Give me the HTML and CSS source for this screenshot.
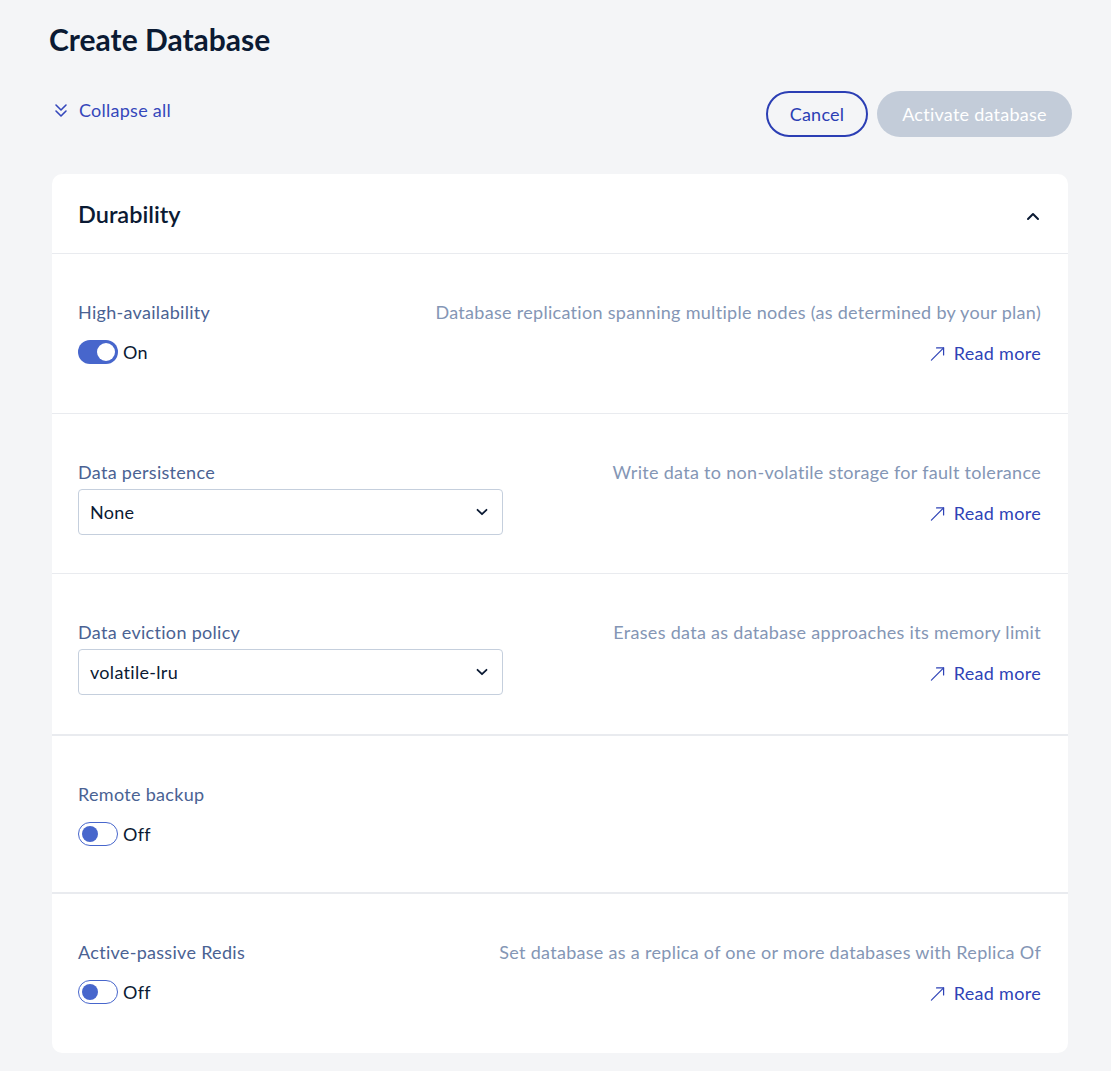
FILE: index.html
```html
<!DOCTYPE html>
<html lang="en">
<head>
<meta charset="utf-8">
<title>Create Database</title>
<link rel="stylesheet" href="styles.css">
</head>
<body>
<main class="page">
  <h1 class="page-title">Create Database</h1>
  <div class="toolbar">
    <button class="collapse-link" type="button">
      <svg class="collapse-icon" width="14" height="16" viewBox="0 0 14 16" fill="none" stroke="currentColor" stroke-width="1.6" stroke-linecap="round" stroke-linejoin="round"><path d="M2 3l5 5 5-5"/><path d="M2 9l5 5 5-5"/></svg>
      <span>Collapse all</span>
    </button>
    <div class="actions">
      <button class="btn btn-outline" type="button">Cancel</button>
      <button class="btn btn-disabled" type="button">Activate database</button>
    </div>
  </div>

  <section class="card">
    <header class="card-header">
      <h2 class="card-title">Durability</h2>
      <svg class="header-chevron" width="14" height="10" viewBox="0 0 14 10" fill="none" stroke="#0b1a33" stroke-width="2" stroke-linecap="round" stroke-linejoin="round"><path d="M2 8l5-5 5 5"/></svg>
    </header>

    <div class="row row-1">
      <div class="field">
        <div class="label">High-availability</div>
        <div class="control">
          <span class="toggle toggle-on"><span class="knob"></span></span>
          <span class="toggle-text">On</span>
        </div>
      </div>
      <div class="info">
        <div class="desc">Database replication spanning multiple nodes (as determined by your plan)</div>
        <a class="read-more" href="#"><svg width="15" height="15" viewBox="0 0 16 16" fill="none" stroke="currentColor" stroke-width="1.3" stroke-linecap="round" stroke-linejoin="round"><path d="M1.5 15L14.5 2"/><path d="M7 2h7.5v7.5"/></svg>Read more</a>
      </div>
    </div>

    <div class="row row-2">
      <div class="field">
        <div class="label">Data persistence</div>
        <div class="control">
          <div class="select"><span>None</span><svg width="12" height="8" viewBox="0 0 12 8" fill="none" stroke="#0b1a33" stroke-width="1.8" stroke-linecap="round" stroke-linejoin="round"><path d="M1.5 1.8L6 6.2l4.5-4.4"/></svg></div>
        </div>
      </div>
      <div class="info">
        <div class="desc">Write data to non-volatile storage for fault tolerance</div>
        <a class="read-more" href="#"><svg width="15" height="15" viewBox="0 0 16 16" fill="none" stroke="currentColor" stroke-width="1.3" stroke-linecap="round" stroke-linejoin="round"><path d="M1.5 15L14.5 2"/><path d="M7 2h7.5v7.5"/></svg>Read more</a>
      </div>
    </div>

    <div class="row row-3">
      <div class="field">
        <div class="label">Data eviction policy</div>
        <div class="control">
          <div class="select"><span>volatile-lru</span><svg width="12" height="8" viewBox="0 0 12 8" fill="none" stroke="#0b1a33" stroke-width="1.8" stroke-linecap="round" stroke-linejoin="round"><path d="M1.5 1.8L6 6.2l4.5-4.4"/></svg></div>
        </div>
      </div>
      <div class="info">
        <div class="desc">Erases data as database approaches its memory limit</div>
        <a class="read-more" href="#"><svg width="15" height="15" viewBox="0 0 16 16" fill="none" stroke="currentColor" stroke-width="1.3" stroke-linecap="round" stroke-linejoin="round"><path d="M1.5 15L14.5 2"/><path d="M7 2h7.5v7.5"/></svg>Read more</a>
      </div>
    </div>

    <div class="row row-4">
      <div class="field">
        <div class="label">Remote backup</div>
        <div class="control">
          <span class="toggle toggle-off"><span class="knob"></span></span>
          <span class="toggle-text">Off</span>
        </div>
      </div>
    </div>

    <div class="row row-5">
      <div class="field">
        <div class="label">Active-passive Redis</div>
        <div class="control">
          <span class="toggle toggle-off"><span class="knob"></span></span>
          <span class="toggle-text">Off</span>
        </div>
      </div>
      <div class="info">
        <div class="desc">Set database as a replica of one or more databases with Replica Of</div>
        <a class="read-more" href="#"><svg width="15" height="15" viewBox="0 0 16 16" fill="none" stroke="currentColor" stroke-width="1.3" stroke-linecap="round" stroke-linejoin="round"><path d="M1.5 15L14.5 2"/><path d="M7 2h7.5v7.5"/></svg>Read more</a>
      </div>
    </div>
  </section>
</main>
</body>
</html>
```

FILE: styles.css
```css
* { box-sizing: border-box; }
html, body { margin: 0; padding: 0; }
body {
  background: #f4f5f7;
  font-family: Lato, "Noto Sans", "Liberation Sans", sans-serif;
  color: #0b1a33;
  width: 1111px;
  height: 1071px;
  overflow: hidden;
  letter-spacing: 0.3px;
}
.page {
  padding: 21px 43px 18px 52px;
}
.page-title {
  margin: 0 0 0 -3px;
  font-size: 30px;
  line-height: 36px;
  font-weight: 700;
  letter-spacing: 0;
  color: #0b1a33;
}
.toolbar {
  display: flex;
  justify-content: space-between;
  align-items: flex-start;
  margin-top: 34px;
  margin-bottom: 37px;
}
.collapse-link {
  display: flex;
  align-items: center;
  gap: 11px;
  background: none;
  border: 0;
  padding: 0;
  margin: 0 0 0 2px;
  margin-top: 7px;
  font: inherit;
  font-size: 18px;
  line-height: 24px;
  letter-spacing: 0.25px;
  color: #3447bb;
  cursor: pointer;
}
.collapse-icon { display: block; }
.actions {
  display: flex;
  gap: 9px;
  margin-right: -4px;
}
.btn {
  height: 46px;
  border-radius: 23px;
  font: inherit;
  font-size: 18px;
  letter-spacing: 0.25px;
  padding: 0;
  cursor: pointer;
}
.btn-outline {
  width: 102px;
  background: transparent;
  border: 2px solid #2b3eb4;
  color: #2b3eb4;
}
.btn-disabled {
  width: 195px;
  background: #c3ccd9;
  border: 0;
  color: #ffffff;
}
.card {
  background: #ffffff;
  border-radius: 10px;
  width: 1016px;
}
.card-header {
  height: 80px;
  display: flex;
  align-items: center;
  justify-content: space-between;
  padding: 0 28px 0 26px;
  border-bottom: 1px solid #e9ebef;
}
.card-title {
  margin: 0;
  font-size: 23.5px;
  font-weight: 600;
  line-height: 28px;
  letter-spacing: 0;
  color: #0b1a33;
}
.header-chevron { margin-top: 4px; display: block; }
.row {
  display: flex;
  justify-content: space-between;
  align-items: flex-start;
  gap: 24px;
  padding: 48px 27px 38px 26px;
  border-bottom: 1px solid #e9ebef;
}
.row-3 { padding-bottom: 39px; border-bottom: 2px solid #e9ebef; }
.row-4 { padding-bottom: 35px; border-bottom: 2px solid #e9ebef; }
.row-5 { padding-bottom: 38px; border-bottom: 0; }
.field { flex: 0 1 425px; min-width: 0; }
.label {
  font-size: 18px;
  line-height: 20px;
  color: #4a6293;
  white-space: nowrap;
}
.control {
  margin-top: 7px;
  height: 46px;
  display: flex;
  align-items: center;
  gap: 5px;
}
.toggle {
  position: relative;
  width: 40px;
  height: 24px;
  border-radius: 12px;
  flex: none;
}
.toggle-on { background: #4766cc; }
.toggle-off { background: #ffffff; border: 1.5px solid #4766cc; }
.knob {
  position: absolute;
  top: 3px;
  width: 18px;
  height: 18px;
  border-radius: 50%;
}
.toggle-on .knob { right: 3px; background: #ffffff; }
.toggle-off .knob { left: 2.5px; top: 2.5px; width: 16px; height: 16px; background: #4766cc; }
.toggle-text {
  font-size: 18px;
  color: #0b1a33;
}
.select {
  width: 425px;
  height: 46px;
  border: 1px solid #c5cfdd;
  border-radius: 4px;
  display: flex;
  align-items: center;
  justify-content: space-between;
  padding: 0 14px 0 11px;
  font-size: 18px;
  color: #0b1a33;
}
.select svg { display: block; }
.info {
  flex: none;
  display: flex;
  flex-direction: column;
  align-items: flex-end;
  white-space: nowrap;
}
.desc {
  font-size: 18px;
  line-height: 20px;
  color: #8496b5;
}
.read-more {
  margin-top: 21px;
  display: flex;
  align-items: center;
  gap: 9px;
  font-size: 18px;
  line-height: 20px;
  color: #2f43b6;
  text-decoration: none;
}
.read-more svg { display: block; }
```
